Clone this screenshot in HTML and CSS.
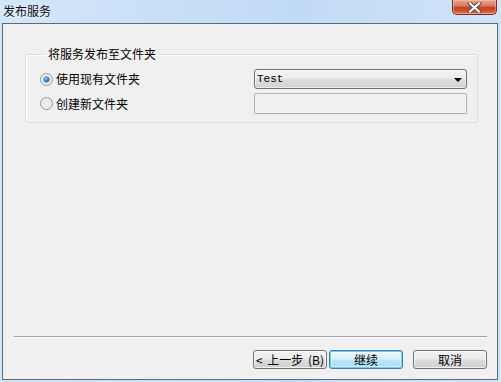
FILE: index.html
```html
<!DOCTYPE html>
<html>
<head>
<meta charset="utf-8">
<link rel="stylesheet" href="styles.css">
</head>
<body>
<div class="window">
  <div class="titlebar">
    <span class="title">发布服务</span>
    <button class="close" aria-label="关闭">
      <svg width="15" height="11" viewBox="0 0 15 11">
        <path d="M3 1.5 L12 9.5 M12 1.5 L3 9.5" stroke="#4a4a4a" stroke-width="4" stroke-linecap="square"/>
        <path d="M3 1.5 L12 9.5 M12 1.5 L3 9.5" stroke="#ffffff" stroke-width="2.2" stroke-linecap="square"/>
      </svg>
    </button>
  </div>
  <div class="client">
    <fieldset class="group">
      <legend class="legend">将服务发布至文件夹</legend>
      <div class="grid">
        <label class="option"><span class="radio checked"></span><span>使用现有文件夹</span></label>
        <div class="combo"><span class="combo-text">Test</span><span class="arrow"></span></div>
        <label class="option"><span class="radio"></span><span>创建新文件夹</span></label>
        <div class="textbox"></div>
      </div>
    </fieldset>
    <div class="separator"></div>
    <div class="buttons">
      <button class="btn back">&lt; 上一步 (B)</button>
      <button class="btn default">继续</button>
      <button class="btn cancel">取消</button>
    </div>
  </div>
</div>
</body>
</html>
```
FILE: styles.css
```css
html, body {
  margin: 0;
  padding: 0;
}
body {
  width: 501px;
  height: 382px;
  overflow: hidden;
  font-family: "Noto Sans CJK SC", "Liberation Sans", sans-serif;
  font-size: 12px;
  color: #000;
}
.window {
  width: 501px;
  height: 382px;
  box-sizing: border-box;
  display: flex;
  flex-direction: column;
  background: linear-gradient(90deg, #d3e6f9 0%, #c6def6 40%, #c2dbf4 60%, #d0e4f8 100%);
}
.titlebar {
  height: 23px;
  display: flex;
  align-items: flex-start;
  justify-content: space-between;
  padding-left: 3px;
  padding-right: 4px;
  box-sizing: border-box;
}
.title {
  font-size: 12px;
  line-height: 16px;
  margin-top: 3px;
  color: #111;
  text-shadow: 0 0 6px #eef6ff;
}
.close {
  width: 45px;
  height: 15px;
  margin: 0;
  padding: 0;
  border: 1px solid #7d2d1c;
  border-top: none;
  border-radius: 0 0 5px 5px;
  background: linear-gradient(180deg, #e9a591 0%, #db7a61 40%, #c4411f 55%, #cf5433 80%, #e2876a 100%);
  box-shadow: inset 0 0 0 1px rgba(255, 200, 180, 0.5);
  display: flex;
  align-items: center;
  justify-content: center;
}
.close svg {
  display: block;
}
.client {
  flex: 1;
  margin: 0 3px 2px 2px;
  border: 1px solid #5d6b79;
  background: #f0f0f0;
  display: flex;
  flex-direction: column;
}
.group {
  margin: 22px 0 0 22px;
  padding: 0 10px 8px 14px;
  width: 453px;
  box-sizing: border-box;
  border: 1px solid #d5dfe5;
  border-radius: 3px;
  box-shadow: inset 1px 1px 0 #fff;
  min-width: 0;
}
.legend {
  margin-left: 6px;
  padding: 0 2px;
  line-height: 16px;
  font-size: 12px;
}
.grid {
  display: grid;
  grid-template-columns: 214px 213px;
  grid-template-rows: 20px 21px;
  row-gap: 4px;
  margin-top: 7px;
}
.option {
  display: flex;
  align-items: center;
  gap: 3px;
  line-height: 16px;
}
.radio {
  width: 13px;
  height: 13px;
  box-sizing: border-box;
  border-radius: 50%;
  border: 1px solid #8e9aa4;
  background: radial-gradient(circle at 50% 50%, #f4f4f4 0%, #e2e4e6 60%, #cfd3d6 100%);
  box-shadow: inset 0 0 0 1px #f6f6f6;
  position: relative;
  flex: none;
}
.radio.checked::after {
  content: "";
  position: absolute;
  left: 3px;
  top: 3px;
  width: 5px;
  height: 5px;
  border-radius: 50%;
  background: radial-gradient(circle at 40% 35%, #9fd3f7 0%, #2f7fbf 50%, #1b4e80 100%);
  box-shadow: 0 0 0 0.5px #2a5f8f;
}
.combo {
  box-sizing: border-box;
  height: 20px;
  border: 1px solid #707070;
  border-radius: 3px;
  background: linear-gradient(180deg, #f3f3f3 0%, #ececec 45%, #dedede 50%, #d2d2d2 100%);
  box-shadow: inset 0 0 0 1px rgba(255, 255, 255, 0.6);
  display: flex;
  align-items: center;
  justify-content: space-between;
  padding: 0 4px 0 2px;
}
.combo-text {
  font-family: "Liberation Mono", "DejaVu Sans Mono", monospace;
  font-size: 11px;
  line-height: 14px;
}
.arrow {
  width: 0;
  height: 0;
  border-left: 4px solid transparent;
  border-right: 4px solid transparent;
  border-top: 4px solid #000;
  margin-top: 1px;
}
.textbox {
  box-sizing: border-box;
  height: 21px;
  border: 1px solid #abadb3;
  border-top-color: #b5b5b5;
  border-radius: 2px;
  background: #f0f0f0;
  box-shadow: inset 0 0 0 1px #f4f4f4;
}
.separator {
  margin: auto 0 0 11px;
  width: 473px;
  height: 1px;
  background: #a0a0a0;
  border-bottom: 1px solid #ffffff;
}
.buttons {
  display: flex;
  justify-content: flex-end;
  width: 484px;
  margin-top: 12px;
  margin-bottom: 10px;
  gap: 2px;
}
.btn {
  box-sizing: border-box;
  width: 74px;
  height: 19px;
  margin: 0;
  padding: 0;
  border: 1px solid #707070;
  border-radius: 3px;
  background: linear-gradient(180deg, #f2f2f2 0%, #ebebeb 48%, #dddddd 52%, #cfcfcf 100%);
  box-shadow: inset 0 0 0 1px rgba(255, 255, 255, 0.7);
  font-family: "Noto Sans CJK SC", "Liberation Sans", sans-serif;
  font-size: 12px;
  line-height: 15px;
  color: #000;
  white-space: pre;
}
.btn.back {
  word-spacing: 2px;
}
.btn.default {
  border-color: #3c7fb1;
  background: linear-gradient(180deg, #eaf6fd 0%, #d9f0fc 48%, #bee6fd 52%, #a7d9f5 100%);
  box-shadow: inset 0 0 0 1px #6fcaf0, inset 0 0 0 2px rgba(255, 255, 255, 0.5);
}
.btn.cancel {
  margin-left: 8px;
}
```
